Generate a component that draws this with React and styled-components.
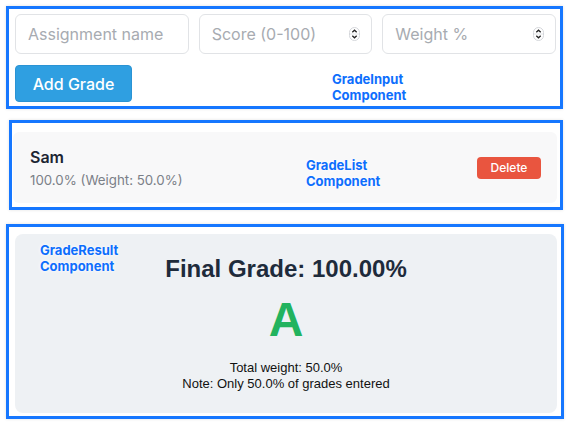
import React from 'react';
import styled, { createGlobalStyle } from 'styled-components';

const GlobalStyle = createGlobalStyle`
  html, body {
    margin: 0;
    padding: 0;
    background: #ffffff;
  }
  body {
    font-family: Inter, "Noto Sans", sans-serif;
    -webkit-font-smoothing: antialiased;
  }
`;

const Page = styled.div`
  width: 566px;
  height: 424px;
  display: flex;
  flex-direction: column;
  overflow: hidden;
`;

// blue annotation frame round each component
const Frame = styled.section`
  position: relative;
  box-sizing: border-box;
  border: 3px solid #1677ff;
  margin-top: ${p => p.$top}px;
  margin-left: ${p => p.$left}px;
  width: ${p => p.$width}px;
  height: ${p => p.$height}px;
  padding: ${p => p.$pad};
  box-shadow: 0 0 3px rgba(0, 0, 0, 0.12);
`;

const Tag = styled.div`
  position: absolute;
  left: ${p => p.$x}px;
  top: ${p => p.$y}px;
  color: #0d6efd;
  font-family: Inter, sans-serif;
  font-weight: 700;
  font-size: 13px;
  line-height: 16px;
  text-shadow: 0 0 4px rgba(255, 255, 255, 0.95), 0 0 2px rgba(255, 255, 255, 0.9);
  white-space: nowrap;
`;

const InputRow = styled.div`
  display: grid;
  grid-template-columns: repeat(3, 1fr);
  gap: 10px;
`;

const Field = styled.div`
  position: relative;
  display: flex;
`;

const TextInput = styled.input`
  box-sizing: border-box;
  width: 100%;
  height: 40px;
  border: 1px solid #e1e3e6;
  border-radius: 6px;
  padding: 0 12px;
  font-family: Inter, sans-serif;
  font-size: 16px;
  color: #333;
  background: #fff;
  outline: none;

  &::placeholder {
    color: #a7abb1;
  }
`;

const Spinner = styled.svg`
  position: absolute;
  right: 12px;
  top: 13px;
  pointer-events: none;
`;

const AddButton = styled.button`
  margin-top: 11px;
  width: 117px;
  height: 37px;
  border: 1px solid #2a93d4;
  border-radius: 4px;
  background: #2f9fe1;
  color: #fff;
  font-family: Inter, sans-serif;
  font-size: 16px;
  font-weight: 500;
  cursor: pointer;
`;

const ListCard = styled.div`
  box-sizing: border-box;
  height: 71px;
  background: #f8f8f9;
  border-radius: 6px;
  display: flex;
  align-items: center;
  justify-content: space-between;
  padding: 0 16px 0 17px;
`;

const ItemInfo = styled.div`
  display: flex;
  flex-direction: column;
  gap: 5px;
`;

const ItemName = styled.div`
  font-size: 16px;
  font-weight: 600;
  color: #1c2533;
`;

const ItemMeta = styled.div`
  font-size: 13.3px;
  color: #7b8088;
`;

const DeleteButton = styled.button`
  width: 64px;
  height: 22px;
  border: none;
  border-radius: 4px;
  background: #e9553f;
  color: #fff;
  font-family: Inter, sans-serif;
  font-size: 12px;
  font-weight: 500;
  cursor: pointer;
`;

const ResultCard = styled.div`
  box-sizing: border-box;
  height: 179px;
  background: #eef1f4;
  border-radius: 8px;
  display: flex;
  flex-direction: column;
  align-items: center;
  padding-top: 21px;
  font-family: "Liberation Sans", Arial, sans-serif;
`;

const FinalGrade = styled.h2`
  margin: 0;
  font-family: "Liberation Sans", Arial, sans-serif;
  font-size: 24px;
  font-weight: 700;
  line-height: 28px;
  color: #1e2b3b;
`;

const Letter = styled.div`
  margin-top: 9px;
  font-size: 48px;
  font-weight: 700;
  line-height: 56px;
  color: ${p => p.$color};
`;

const Note = styled.p`
  margin: 0;
  font-family: "Liberation Sans", Arial, sans-serif;
  font-size: 13px;
  line-height: 16px;
  color: #111;
  margin-top: ${p => p.$top || 0}px;
`;

const SpinIcon = () => (
  <Spinner width="11" height="14" viewBox="0 0 11 14">
    <rect x="0.5" y="0.5" width="10" height="13" rx="5" fill="#fff" stroke="#d4d6da" />
    <line x1="1" y1="7" x2="10" y2="7" stroke="#e3e5e8" />
    <path d="M3.3 5.2 L5.5 3.2 L7.7 5.2" fill="none" stroke="#222" strokeWidth="1.3" />
    <path d="M3.3 8.8 L5.5 10.8 L7.7 8.8" fill="none" stroke="#222" strokeWidth="1.3" />
  </Spinner>
);

const grades = [{ id: 1, name: 'Sam', score: 100, weight: 50 }];

function letterFor(score) {
  if (score >= 90) return { letter: 'A', color: '#22b35e' };
  if (score >= 80) return { letter: 'B', color: '#3b82f6' };
  if (score >= 70) return { letter: 'C', color: '#f59e0b' };
  return { letter: 'F', color: '#e9553f' };
}

const App = () => {
  const totalWeight = grades.reduce((s, g) => s + g.weight, 0);
  const final = grades.reduce((s, g) => s + g.score * g.weight, 0) / totalWeight;
  const { letter, color } = letterFor(final);

  return (
    <Page>
      <GlobalStyle />

      <Frame $top={6} $left={6} $width={557} $height={103} $pad="5px 4px 0 6px">
        <InputRow>
          <Field>
            <TextInput type="text" placeholder="Assignment name" />
          </Field>
          <Field>
            <TextInput type="text" placeholder="Score (0-100)" />
            <SpinIcon />
          </Field>
          <Field>
            <TextInput type="text" placeholder="Weight %" />
            <SpinIcon />
          </Field>
        </InputRow>
        <AddButton>Add Grade</AddButton>
        <Tag $x={323} $y={62}>GradeInput<br />Component</Tag>
      </Frame>

      <Frame $top={11} $left={9} $width={554} $height={90} $pad="9px 3px 4px 1px">
        {grades.map(g => (
          <ListCard key={g.id}>
            <ItemInfo>
              <ItemName>{g.name}</ItemName>
              <ItemMeta>
                {g.score.toFixed(1)}% (Weight: {g.weight.toFixed(1)}%)
              </ItemMeta>
            </ItemInfo>
            <DeleteButton>Delete</DeleteButton>
          </ListCard>
        ))}
        <Tag $x={294} $y={34}>GradeList<br />Component</Tag>
      </Frame>

      <Frame $top={14} $left={6} $width={558} $height={195} $pad="7px 4px 3px 6px">
        <ResultCard>
          <FinalGrade>Final Grade: {final.toFixed(2)}%</FinalGrade>
          <Letter $color={color}>{letter}</Letter>
          <Note $top={12}>Total weight: {totalWeight.toFixed(1)}%</Note>
          <Note>Note: Only {totalWeight.toFixed(1)}% of grades entered</Note>
        </ResultCard>
        <Tag $x={31} $y={15}>GradeResult<br />Component</Tag>
      </Frame>
    </Page>
  );
};

export default App;
